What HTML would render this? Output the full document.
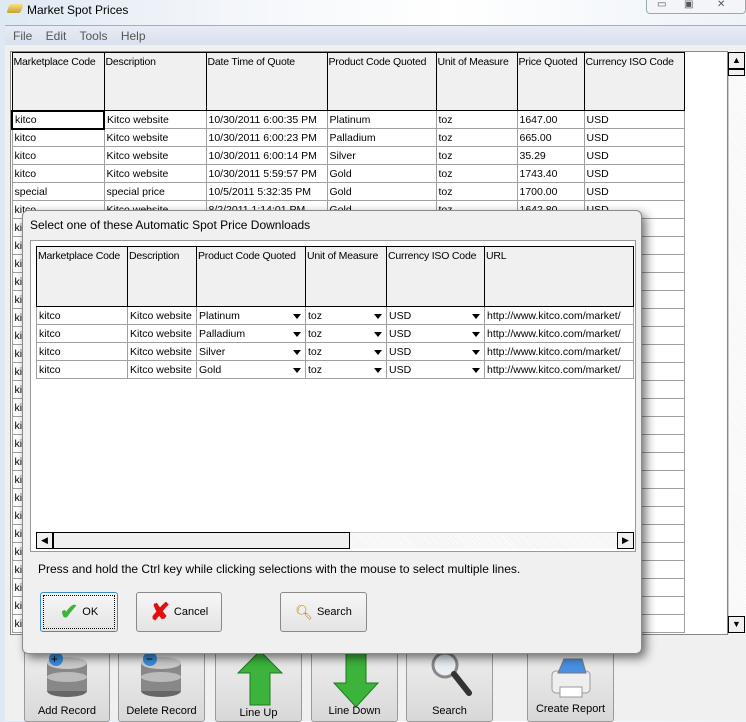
<!DOCTYPE html>
<html><head><style>
*{box-sizing:border-box;margin:0;padding:0}
body{width:746px;height:721px;overflow:hidden;position:relative;font-family:"Liberation Sans",sans-serif;font-size:11px;color:#000;background:linear-gradient(90deg,#dfe9f3,#f3f6fa 30%,#fff 60%,#eef3f8);}
.abs{position:absolute}
table{border-collapse:collapse;table-layout:fixed}
td{border:1px solid #a0a0a0;height:18px;padding:0 2px;white-space:nowrap;overflow:hidden;font-size:10.5px;vertical-align:middle}
th{border:1px solid #000;background:#f0f0f0;font-weight:normal;text-align:left;vertical-align:top;padding:3px 1px;font-size:10.5px;letter-spacing:-0.2px;white-space:nowrap;overflow:hidden}
.dd{position:relative}
.dd:after{content:"";position:absolute;right:4px;top:7px;border:4px solid transparent;border-top:5px solid #000;border-bottom:0}
.btn{position:absolute;border:1px solid #8a8a8a;border-radius:3px;background:linear-gradient(#f6f6f6,#e4e4e4);font-size:11px;display:flex;align-items:center;justify-content:center;gap:4px}
.tb{position:absolute;top:650px;height:72px;border:1px solid #9a9a9a;border-radius:3px;background:linear-gradient(#eee,#d8d8d8);font-size:11px;text-align:center}
.tb span{position:absolute;bottom:4px;left:0;right:0}
</style></head><body>
<div class="abs" style="left:8px;top:4px;width:14px;height:9px;background:linear-gradient(#f6e08a,#c9a030);transform:skewX(-20deg);border-radius:2px"></div>
<div class="abs" style="left:27px;top:3px;font-size:12px">Market Spot Prices</div>
<div class="abs" style="left:646px;top:0;width:100px;height:14px;border:1px solid #9aa;border-top:0;border-radius:0 0 4px 4px;background:#f3f5f8;font-size:10px;color:#555"><span style="position:absolute;left:10px;top:-1px">▭</span><span style="position:absolute;left:37px;top:-1px">▣</span><span style="position:absolute;left:70px;top:-1px">✕</span></div>
<div class="abs" style="left:5px;top:25px;width:741px;height:20px;background:linear-gradient(#e7ecf5,#d9e1ee);border-top:1px solid #aab;font-size:12px;color:#555;padding:3px 0 0 8px;word-spacing:10px">File Edit Tools Help</div>
<div class="abs" style="left:5px;top:45px;width:741px;height:676px;background:#f0f0f0"></div>
<div class="abs" style="left:10px;top:51px;width:718px;height:584px;background:#fff;border:1px solid #888;overflow:hidden">
<table class="abs" style="left:0;top:0;width:672px">
<colgroup><col style="width:92px"><col style="width:102px"><col style="width:121px"><col style="width:109px"><col style="width:81px"><col style="width:67px"><col style="width:100px"></colgroup>
<tr style="height:58px"><th>Marketplace Code</th><th>Description</th><th>Date Time of Quote</th><th>Product Code Quoted</th><th>Unit of Measure</th><th>Price Quoted</th><th>Currency ISO Code</th></tr>
<tr><td style="border:2px solid #000">kitco</td><td>Kitco website</td><td>10/30/2011 6:00:35 PM</td><td>Platinum</td><td>toz</td><td>1647.00</td><td>USD</td></tr>
<tr><td>kitco</td><td>Kitco website</td><td>10/30/2011 6:00:23 PM</td><td>Palladium</td><td>toz</td><td>665.00</td><td>USD</td></tr>
<tr><td>kitco</td><td>Kitco website</td><td>10/30/2011 6:00:14 PM</td><td>Silver</td><td>toz</td><td>35.29</td><td>USD</td></tr>
<tr><td>kitco</td><td>Kitco website</td><td>10/30/2011 5:59:57 PM</td><td>Gold</td><td>toz</td><td>1743.40</td><td>USD</td></tr>
<tr><td>special</td><td>special price</td><td>10/5/2011 5:32:35 PM</td><td>Gold</td><td>toz</td><td>1700.00</td><td>USD</td></tr>
<tr><td>kitco</td><td>Kitco website</td><td>8/2/2011 1:14:01 PM</td><td>Gold</td><td>toz</td><td>1642.80</td><td>USD</td></tr>
<tr><td>ki</td><td></td><td></td><td></td><td></td><td></td><td></td></tr><tr><td>ki</td><td></td><td></td><td></td><td></td><td></td><td></td></tr><tr><td>ki</td><td></td><td></td><td></td><td></td><td></td><td></td></tr><tr><td>ki</td><td></td><td></td><td></td><td></td><td></td><td></td></tr><tr><td>ki</td><td></td><td></td><td></td><td></td><td></td><td></td></tr><tr><td>ki</td><td></td><td></td><td></td><td></td><td></td><td></td></tr><tr><td>ki</td><td></td><td></td><td></td><td></td><td></td><td></td></tr><tr><td>ki</td><td></td><td></td><td></td><td></td><td></td><td></td></tr><tr><td>ki</td><td></td><td></td><td></td><td></td><td></td><td></td></tr><tr><td>ki</td><td></td><td></td><td></td><td></td><td></td><td></td></tr><tr><td>ki</td><td></td><td></td><td></td><td></td><td></td><td></td></tr><tr><td>ki</td><td></td><td></td><td></td><td></td><td></td><td></td></tr><tr><td>ki</td><td></td><td></td><td></td><td></td><td></td><td></td></tr><tr><td>ki</td><td></td><td></td><td></td><td></td><td></td><td></td></tr><tr><td>ki</td><td></td><td></td><td></td><td></td><td></td><td></td></tr><tr><td>ki</td><td></td><td></td><td></td><td></td><td></td><td></td></tr><tr><td>ki</td><td></td><td></td><td></td><td></td><td></td><td></td></tr><tr><td>ki</td><td></td><td></td><td></td><td></td><td></td><td></td></tr><tr><td>ki</td><td></td><td></td><td></td><td></td><td></td><td></td></tr><tr><td>ki</td><td></td><td></td><td></td><td></td><td></td><td></td></tr><tr><td>ki</td><td></td><td></td><td></td><td></td><td></td><td></td></tr><tr><td>ki</td><td></td><td></td><td></td><td></td><td></td><td></td></tr><tr><td>ki</td><td></td><td></td><td></td><td></td><td></td><td></td></tr>
</table></div>
<div class="abs" style="left:728px;top:52px;width:18px;height:582px;background:repeating-linear-gradient(45deg,#f4f4f4 0 1px,#fff 1px 2px);border-left:1px solid #ccc"></div>
<div class="abs" style="left:728px;top:52px;width:17px;height:17px;border:1px solid #000;background:#f0f0f0;font-size:9px;text-align:center;line-height:15px">▲</div>
<div class="abs" style="left:728px;top:69px;width:17px;height:7px;border:1px solid #000;background:#f0f0f0"></div>
<div class="abs" style="left:728px;top:616px;width:17px;height:17px;border:1px solid #000;background:#f0f0f0;font-size:9px;text-align:center;line-height:15px">▼</div>

<div class="tb" style="left:24px;width:86px"><svg class="abs" style="left:20px;top:2px" width="44" height="46"><ellipse cx="22" cy="38" rx="20" ry="6" fill="#666"/><rect x="2" y="10" width="40" height="28" fill="#888"/><ellipse cx="22" cy="24" rx="20" ry="5" fill="#bbb"/><ellipse cx="22" cy="10" rx="20" ry="6" fill="#ccc"/><circle cx="11" cy="6" r="7" fill="#3a8ee0"/><text x="6" y="10" font-size="12" fill="#000">+</text></svg><span>Add Record</span></div>
<div class="tb" style="left:118px;width:87px"><svg class="abs" style="left:20px;top:2px" width="44" height="46"><ellipse cx="22" cy="38" rx="20" ry="6" fill="#666"/><rect x="2" y="10" width="40" height="28" fill="#888"/><ellipse cx="22" cy="24" rx="20" ry="5" fill="#bbb"/><ellipse cx="22" cy="10" rx="20" ry="6" fill="#ccc"/><circle cx="11" cy="6" r="7" fill="#3a8ee0"/><text x="7" y="10" font-size="12">−</text></svg><span>Delete Record</span></div>
<div class="tb" style="left:215px;width:87px"><svg class="abs" style="left:20px;top:0" width="48" height="56"><path d="M24 0 L46 22 L34 22 L34 54 L14 54 L14 22 L2 22Z" fill="#3cb43c" stroke="#1d7a1d"/></svg><span style="bottom:2px">Line Up</span></div>
<div class="tb" style="left:311px;width:87px"><svg class="abs" style="left:20px;top:0" width="48" height="56"><path d="M14 0 L34 0 L34 32 L46 32 L24 56 L2 32 L14 32Z" fill="#3cb43c" stroke="#1d7a1d"/></svg><span>Line Down</span></div>
<div class="tb" style="left:406px;width:87px"><svg class="abs" style="left:22px;top:0" width="44" height="50"><circle cx="16" cy="14" r="12" fill="#e8eef4" stroke="#888" stroke-width="3"/><path d="M25 23 L40 42" stroke="#333" stroke-width="6" stroke-linecap="round"/></svg><span>Search</span></div>
<div class="tb" style="left:527px;width:87px"><svg class="abs" style="left:20px;top:2px" width="46" height="50"><rect x="4" y="18" width="38" height="22" rx="4" fill="#eee" stroke="#999"/><path d="M10 20 L16 6 L34 6 L38 20Z" fill="#4a90e2" stroke="#777"/><rect x="12" y="34" width="22" height="10" fill="#fff" stroke="#999"/></svg><span style="bottom:6px">Create Report</span></div>

<div class="abs" style="left:22px;top:210px;width:620px;height:444px;background:#f0f0f0;border:1px solid #8a8a8a;border-radius:6px;box-shadow:4px 4px 10px rgba(0,0,0,.55)"></div>
<div class="abs" style="left:30px;top:218px;font-size:12px">Select one of these Automatic Spot Price Downloads</div>
<div class="abs" style="left:30px;top:240px;width:606px;height:312px;background:#fff;border:1px solid #999"></div>
<table class="abs" style="left:36px;top:246px;width:597px">
<colgroup><col style="width:91px"><col style="width:69px"><col style="width:109px"><col style="width:81px"><col style="width:98px"><col style="width:149px"></colgroup>
<tr style="height:60px"><th>Marketplace Code</th><th>Description</th><th>Product Code Quoted</th><th>Unit of Measure</th><th>Currency ISO Code</th><th>URL</th></tr>
<tr><td>kitco</td><td>Kitco website</td><td class="dd">Platinum</td><td class="dd">toz</td><td class="dd">USD</td><td>http://www.kitco.com/market/</td></tr>
<tr><td>kitco</td><td>Kitco website</td><td class="dd">Palladium</td><td class="dd">toz</td><td class="dd">USD</td><td>http://www.kitco.com/market/</td></tr>
<tr><td>kitco</td><td>Kitco website</td><td class="dd">Silver</td><td class="dd">toz</td><td class="dd">USD</td><td>http://www.kitco.com/market/</td></tr>
<tr><td>kitco</td><td>Kitco website</td><td class="dd">Gold</td><td class="dd">toz</td><td class="dd">USD</td><td>http://www.kitco.com/market/</td></tr>
</table>
<div class="abs" style="left:36px;top:532px;width:598px;height:17px;background:repeating-linear-gradient(45deg,#f0f0f0 0 1px,#fff 1px 2px);border-top:1px solid #ccc"></div>
<div class="abs" style="left:36px;top:532px;width:17px;height:17px;border:1px solid #000;background:#f0f0f0;font-size:9px;text-align:center;line-height:15px">◀</div>
<div class="abs" style="left:53px;top:532px;width:297px;height:17px;border:1px solid #000;background:#f0f0f0"></div>
<div class="abs" style="left:617px;top:532px;width:17px;height:17px;border:1px solid #000;background:#f0f0f0;font-size:9px;text-align:center;line-height:15px">▶</div>
<div class="abs" style="left:38px;top:562px;font-size:12px">Press and hold the Ctrl key while clicking selections with the mouse to select multiple lines.</div>
<div class="btn" style="left:40px;top:592px;width:78px;height:40px;border:1px solid #3a8ec8;outline:1px dotted #000;outline-offset:-4px"><span style="color:#3bb53b;font-size:22px;font-weight:bold">✔</span>OK</div>
<div class="btn" style="left:136px;top:592px;width:86px;height:40px"><span style="color:#e01010;font-size:24px;font-weight:bold">✘</span>Cancel</div>
<div class="btn" style="left:280px;top:592px;width:87px;height:40px"><span style="font-size:14px;color:#c08020">🔍︎</span>Search</div>
</body></html>
